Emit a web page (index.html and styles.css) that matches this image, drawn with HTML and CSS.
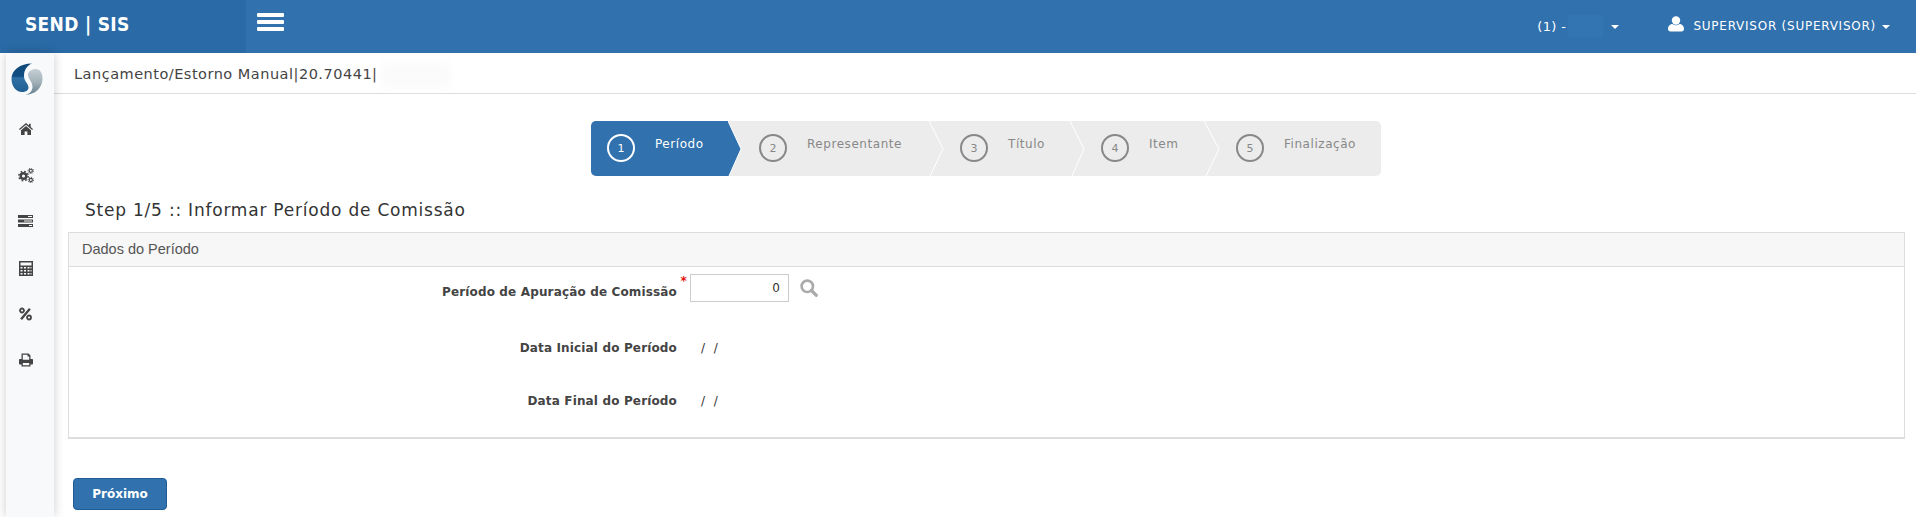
FILE: index.html
```html
<!DOCTYPE html>
<html lang="pt">
<head>
<meta charset="utf-8">
<title>SEND | SIS</title>
<link rel="stylesheet" href="styles.css">
</head>
<body>
<header class="topbar">
  <div class="brand">SEND | SIS</div>
  <div class="burger"><span></span><span></span><span></span></div>
  <div class="top-right">
    <div class="top-item unit">(1) -<span class="blur-top"></span><span class="caret"></span></div>
    <div class="top-item user">
      <svg class="user-icon" viewBox="0 0 16 16"><circle cx="8" cy="4.500" r="4.200" fill="#fff"/><path d="M0 13c0-3.500 2.500-5 4.500-5 1 .9 2.200 1.300 3.500 1.300S10.500 8.900 11.500 8c2 0 4.500 1.500 4.500 5 0 1.500-1 2.500-2.500 2.500h-11C1 15.500 0 14.500 0 13z" fill="#fff"/></svg>
      <span>SUPERVISOR (SUPERVISOR)</span><span class="caret"></span>
    </div>
  </div>
</header>
<div class="layout">
  <nav class="sidebar">
    <svg class="logo" viewBox="0 0 32 32">
      <defs>
        <linearGradient id="lg1" x1="0" y1="0" x2="0" y2="1"><stop offset="0" stop-color="#0f4878"/><stop offset=".45" stop-color="#134f84"/><stop offset=".5" stop-color="#2f6fa3"/><stop offset="1" stop-color="#1f5f94"/></linearGradient>
        <linearGradient id="lg2" x1="0" y1="0" x2="0" y2="1"><stop offset="0" stop-color="#c5cfd4"/><stop offset=".5" stop-color="#a3b2ba"/><stop offset="1" stop-color="#66808e"/></linearGradient>
      </defs>
      <path d="M21 .500C9 .500.500 7 .500 16c0 7 4.500 13 10.500 13 3.500 0 6.500-1.500 6.500-4.500 0-4-4.500-6-4.500-11.500C13 7 16 2.500 21 .500z" fill="url(#lg1)"/>
      <path d="M14 31.800c10 0 17.500-6.800 17.500-16.300 0-5.500-2.500-9.500-6.500-9.500-4.500 0-8 2.500-8 5.500 0 4.500 4.500 7 4.500 12.500 0 3.500-2.500 7-7.500 7.800z" fill="url(#lg2)"/>
    </svg>
    <svg class="nav-icon home" viewBox="0 0 14 12"><path d="M7 0 0 6l.8 1L7 1.800 13.200 7l.8-1-2.300-2V.7H10v1.900z"/><path d="M7 3 2 7.200V12h3.600V8.500h2.800V12H12V7.200z"/></svg>
    <svg class="nav-icon gears" viewBox="0 0 16 15"><g fill="none" stroke="#444"><circle cx="5.500" cy="8" r="2.800" stroke-width="2.400"/><circle cx="5.500" cy="8" r="4.700" stroke-width="1.400" stroke-dasharray="1.800 1.900"/><circle cx="12.800" cy="2.800" r="1.600" stroke-width="1.100"/><circle cx="12.800" cy="2.800" r="2.700" stroke-width="1" stroke-dasharray="1.100 1"/><circle cx="12.800" cy="12" r="1.600" stroke-width="1.100"/><circle cx="12.800" cy="12" r="2.700" stroke-width="1" stroke-dasharray="1.100 1"/></g></svg>
    <svg class="nav-icon tasks" viewBox="0 0 15 12"><path fill-rule="evenodd" d="M0 0h15v3H0zM10 1v1h4V1zM0 4.500h15v3H0zM6 5.500v1h8v-1zM0 9h15v3H0zM11 10v1h3v-1z"/></svg>
    <svg class="nav-icon calc" viewBox="0 0 14 15"><path fill-rule="evenodd" d="M0 0h14v15H0zM1.500 1.500v3h11v-3zM1.500 6v1.500h2V6zM5 6v1.500h2V6zM8.500 6v1.500h2V6zM11.500 6v1.500h1V6zM1.500 9v1.500h2V9zM5 9v1.500h2V9zM8.500 9v1.500h2V9zM11.500 9v1.500h1V9zM1.500 12v1.500h2V12zM5 12v1.500h2V12zM8.500 12v1.500h2V12zM11.500 12v1.500h1V12z"/></svg>
    <svg class="nav-icon pct" viewBox="0 0 13 13"><path d="M10 .5 11.800 2 3 12.500 1.200 11z"/><g fill="none" stroke="#444" stroke-width="1.800"><circle cx="3" cy="3" r="2"/><circle cx="10" cy="10" r="2"/></g></svg>
    <svg class="nav-icon print" viewBox="0 0 14 13"><path fill-rule="evenodd" d="M2.500 0h7L11.500 2v3.500H13c.6 0 1 .4 1 1V10c0 .5-.4 1-1 1h-1.500v2h-9v-2H1c-.6 0-1-.5-1-1V6.500c0-.6.400-1 1-1h1.500zM3.800 1.300v5h6.400V3H8.500V1.300zM3.800 9.500v2.200h6.400V9.500z"/></svg>
  </nav>
  <main class="content">
    <div class="crumb"><span>Lançamento/Estorno Manual|20.70441|</span><span class="blur-crumb"></span></div>
    <div class="wizard-wrap">
      <ol class="wizard">
        <li class="step step-a active"><span class="num">1</span><span class="lbl">Período</span><svg class="tip" viewBox="0 0 16 55"><polygon points="0,0 13,28 1,55 0,55" fill="#3071ae"/><polyline points="0,0 13,28 1,55" fill="none" stroke="#fff"/></svg></li>
        <li class="step step-b"><span class="num">2</span><span class="lbl">Representante</span><svg class="tip" viewBox="0 0 16 55"><polyline points="0,0 14,28 1,55" fill="none" stroke="#fff"/></svg></li>
        <li class="step step-c"><span class="num">3</span><span class="lbl">Título</span><svg class="tip" viewBox="0 0 16 55"><polyline points="0,0 14,28 2,55" fill="none" stroke="#fff"/></svg></li>
        <li class="step step-d"><span class="num">4</span><span class="lbl">Item</span><svg class="tip" viewBox="0 0 16 55"><polyline points="0,0 15,28 2,55" fill="none" stroke="#fff"/></svg></li>
        <li class="step step-e"><span class="num">5</span><span class="lbl">Finalização</span></li>
      </ol>
    </div>
    <h2 class="step-title">Step 1/5 :: Informar Período de Comissão</h2>
    <section class="panel">
      <div class="panel-head">Dados do Período</div>
      <div class="panel-body">
        <div class="row row-input">
          <label class="lbl-field">Período de Apuração de Comissão<span class="req">*</span></label>
          <div class="value">
            <div class="input">0</div>
            <svg class="search" viewBox="0 0 18 18"><circle cx="7.300" cy="7.300" r="5.700" fill="none" stroke="#aaa" stroke-width="2.600"/><path d="M11.500 11.500 16.300 16.300" stroke="#aaa" stroke-width="3.200" stroke-linecap="round"/></svg>
          </div>
        </div>
        <div class="row row-a">
          <label class="lbl-field">Data Inicial do Período</label>
          <div class="value date">/ /</div>
        </div>
        <div class="row row-b">
          <label class="lbl-field">Data Final do Período</label>
          <div class="value date">/ /</div>
        </div>
      </div>
    </section>
    <button class="btn" type="button">Próximo</button>
  </main>
</div>
</body>
</html>
```
FILE: styles.css
```css
* { box-sizing: border-box; }
html, body { margin: 0; height: 517px; overflow: hidden; background: #fff; }
body { font-family: "DejaVu Sans", Verdana, sans-serif; font-size: 12px; color: #333; }

.topbar { height: 53px; background: #3071ae; display: flex; align-items: stretch; color: #fff; }
.brand { width: 246px; background: #2a6aa6; padding: 13px 0 0 25px; font-family: "DejaVu Sans Condensed", "DejaVu Sans", sans-serif; font-weight: 700; font-size: 19px; line-height: 22px; letter-spacing: .3px; }
.burger { margin: 13px 0 0 11px; width: 27px; display: flex; flex-direction: column; gap: 3px; }
.burger span { height: 4px; background: #fff; border-radius: 1px; }
.top-right { margin-left: auto; display: flex; font-size: 12px; letter-spacing: .75px; }
.top-item { display: flex; align-items: center; height: 52px; }
.unit { margin-right: 49px; font-size: 13px; letter-spacing: .4px; }
.blur-top { display: inline-block; width: 35px; height: 22px; margin-left: 2px; background: #3375b2; }
.caret { display: inline-block; width: 0; height: 0; border: 4px solid transparent; border-top-color: #fff; border-bottom: 0; margin-left: 8px; margin-top: 2px; }
.user { margin-right: 26px; }
.user-icon { width: 16px; height: 16px; margin-right: 9px; margin-top: -4px; }
.user .caret { margin-left: 6px; }

.layout { display: flex; height: 464px; }
.sidebar { width: 48px; margin-left: 6px; background: #f8f9fb; box-shadow: 0 0 10px rgba(0,0,0,.2); display: flex; flex-direction: column; align-items: center; padding-top: 10px; position: relative; flex: none; }
.logo { width: 32px; height: 32px; margin: 0 0 0 -7px; flex: none; }
.nav-icon { fill: #444; display: block; flex: none; margin-left: -9px; }
.home { width: 14px; height: 12px; margin-top: 28px; }
.gears { width: 16px; height: 15px; margin-top: 33px; }
.tasks { width: 15px; height: 12px; margin-top: 32px; }
.calc { width: 14px; height: 15px; margin-top: 34px; }
.pct { width: 13px; height: 14px; margin-top: 31px; }
.print { width: 14px; height: 14px; margin-top: 32px; }

.content { flex: 1; min-width: 0; }
.crumb { height: 41px; border-bottom: 1px solid #ddd; padding: 12px 0 0 20px; font-size: 14.500px; line-height: 18px; letter-spacing: .5px; color: #444; display: flex; }
.blur-crumb { width: 70px; height: 26px; margin: -2px 0 0 3px; background: #fbfbfb; filter: blur(3px); }

.wizard-wrap { padding: 27px 0 0 537px; }
.wizard { list-style: none; margin: 0; padding: 0; display: flex; width: 790px; height: 55px; background: #ececec; border-radius: 5px; }
.step { position: relative; display: flex; align-items: flex-start; padding-top: 13px; color: #888; font-size: 12px; flex: none; }
.step-a { width: 137px; background: #3071ae; color: #fff; border-radius: 5px 0 0 5px; padding-left: 16px; }
.step-b { width: 201px; padding-left: 31px; }
.step-c { width: 141px; padding-left: 31px; }
.step-d { width: 134px; padding-left: 31px; }
.step-e { width: 177px; padding-left: 32px; }
.num { width: 28px; height: 28px; border: 2px solid #888; border-radius: 50%; display: flex; align-items: center; justify-content: center; font-size: 11px; flex: none; }
.active .num { border-color: #fff; }
.lbl { margin: 2px 0 0 20px; line-height: 16px; letter-spacing: .55px; }
.tip { position: absolute; left: 100%; top: 0; width: 16px; height: 55px; z-index: 1; }

.step-title { margin: 23px 0 0 31px; font-size: 17px; font-weight: 400; line-height: 22px; color: #333; letter-spacing: .78px; }
.panel { margin: 11px 11px 0 14px; height: 207px; border: 1px solid #ddd; border-bottom-width: 2px; }
.panel-head { height: 34px; background: #f7f7f7; border-bottom: 1px solid #ddd; padding: 0 0 0 13px; line-height: 32px; font-family: "Liberation Sans", Arial, sans-serif; font-size: 14.500px; color: #555; }
.row { display: grid; grid-template-columns: 608px 1fr; column-gap: 13px; }
.row-input { margin-top: 7px; align-items: start; }
.row-a { margin-top: 37px; }
.row-b { margin-top: 35px; }
.lbl-field { position: relative; text-align: right; font-weight: 700; font-size: 12px; line-height: 18px; letter-spacing: .15px; color: #444; }
.row-input .lbl-field { padding-top: 9px; }
.req { position: absolute; right: -10px; top: 0; color: #e01010; font-size: 12px; line-height: 14px; }
.value { display: flex; align-items: center; gap: 11px; }
.input { width: 99px; height: 28px; border: 1px solid #ccc; text-align: right; padding-right: 8px; line-height: 26px; font-size: 12px; color: #333; }
.search { width: 18px; height: 18px; }
.date { padding-left: 11px; line-height: 18px; font-size: 12px; word-spacing: 5px; }

.btn { display: block; margin: 39px 0 0 19px; width: 94px; height: 32px; background: #3071ae; color: #fff; border: 1px solid #1f5c96; border-radius: 4px; font: 700 12px "DejaVu Sans", sans-serif; padding: 0; }
```
